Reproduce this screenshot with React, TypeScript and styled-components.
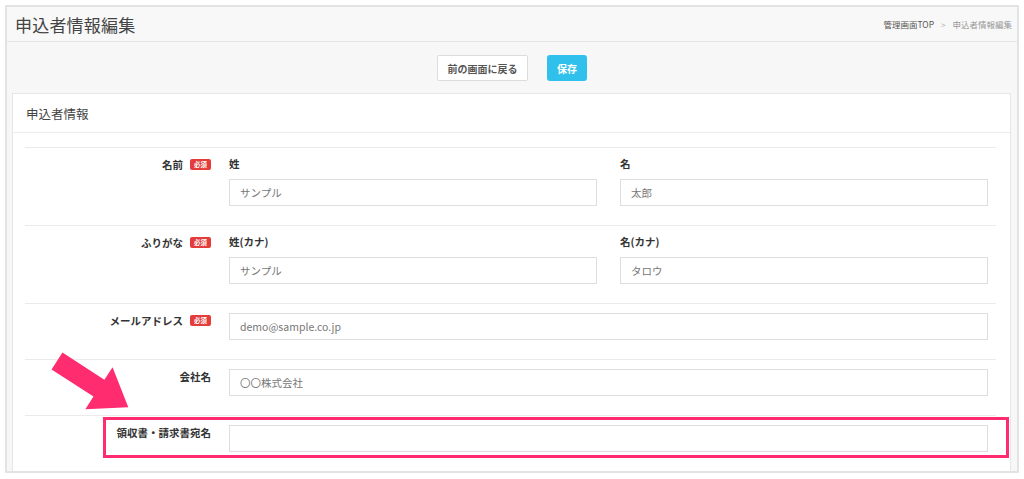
import React from 'react';
import { styled, createGlobalStyle } from 'styled-components';

const GlobalStyle = createGlobalStyle`
  html, body {
    margin: 0;
    padding: 0;
    background: #ffffff;
  }
  body {
    font-family: "Noto Sans CJK JP", "Noto Sans", sans-serif;
    color: #333;
  }
  * {
    box-sizing: border-box;
  }
`;

type Field = {
  label: string;
  required?: boolean;
  inputs: { sub?: string; value: string }[];
  highlight?: boolean;
};

const fields: Field[] = [
  {
    label: '名前',
    required: true,
    inputs: [
      { sub: '姓', value: 'サンプル' },
      { sub: '名', value: '太郎' },
    ],
  },
  {
    label: 'ふりがな',
    required: true,
    inputs: [
      { sub: '姓(カナ)', value: 'サンプル' },
      { sub: '名(カナ)', value: 'タロウ' },
    ],
  },
  {
    label: 'メールアドレス',
    required: true,
    inputs: [{ value: 'demo@sample.co.jp' }],
  },
  {
    label: '会社名',
    inputs: [{ value: '〇〇株式会社' }],
  },
  {
    label: '領収書・請求書宛名',
    inputs: [{ value: '' }],
    highlight: true,
  },
];

const Arrow = () => (
  <ArrowSvg width="100" height="80" viewBox="0 0 100 80">
    <g transform="translate(17,21) rotate(33)">
      <polygon
        points="0,-10 50,-10 50,-25 85,0 50,25 50,10 0,10"
        fill="#ff2d6f"
      />
    </g>
  </ArrowSvg>
);

const App = () => {
  return (
    <>
      <GlobalStyle />
      <Frame>
        <Header>
          <Title>申込者情報編集</Title>
          <Breadcrumb>
            <Crumb>管理画面TOP</Crumb>
            <Sep>&gt;</Sep>
            <Crumb $current>申込者情報編集</Crumb>
          </Breadcrumb>
        </Header>
        <Toolbar>
          <BackButton>前の画面に戻る</BackButton>
          <SaveButton>保存</SaveButton>
        </Toolbar>
        <Panel>
          <PanelHeader>申込者情報</PanelHeader>
          <PanelBody>
            {fields.map((f) => (
              <Row key={f.label}>
                <Label>
                  {f.label}
                  {f.required && <Badge>必須</Badge>}
                </Label>
                <Inputs $cols={f.inputs.length}>
                  {f.inputs.map((inp, i) => (
                    <InputCell key={i}>
                      {inp.sub && <SubLabel>{inp.sub}</SubLabel>}
                      <TextBox $single={!inp.sub}>{inp.value}</TextBox>
                    </InputCell>
                  ))}
                </Inputs>
                {f.highlight && <Highlight />}
              </Row>
            ))}
          </PanelBody>
        </Panel>
        <Arrow />
      </Frame>
    </>
  );
};

const Frame = styled.div`
  position: relative;
  margin: 5px 5px 0 5px;
  width: 1014px;
  height: 468px;
  border: 2px solid #e3e3e3;
  background: #f7f7f7;
  display: flex;
  flex-direction: column;
  overflow: hidden;
`;

const Header = styled.div`
  flex-shrink: 0;
  height: 35px;
  display: flex;
  align-items: center;
  justify-content: space-between;
  padding: 0 5px 0 8px;
  background: #f8f8f8;
  border-bottom: 1px solid #e6e6e6;
`;

const Title = styled.h1`
  margin: 0;
  font-size: 17px;
  font-weight: 400;
  color: #444;
  letter-spacing: 0.2px;
`;

const Breadcrumb = styled.div`
  display: flex;
  align-items: center;
  gap: 7px;
  font-size: 8.5px;
`;

const Crumb = styled.span<{ $current?: boolean }>`
  color: ${(p) => (p.$current ? '#999' : '#555')};
`;

const Sep = styled.span`
  color: #aaa;
  font-size: 8px;
`;

const Toolbar = styled.div`
  flex-shrink: 0;
  display: flex;
  justify-content: center;
  gap: 19px;
  padding: 13px 0 12px;
`;

const BackButton = styled.button`
  height: 26px;
  width: 91px;
  background: #fff;
  border: 1px solid #dcdcdc;
  border-radius: 2px;
  font-family: inherit;
  font-size: 10px;
  font-weight: 700;
  color: #555;
  padding: 0;
`;

const SaveButton = styled.button`
  height: 26px;
  width: 40px;
  background: #2fc1ec;
  border: none;
  border-radius: 3px;
  font-family: inherit;
  font-size: 10px;
  font-weight: 700;
  color: #fff;
  padding: 0;
`;

const Panel = styled.div`
  margin: 0 6px 0 5px;
  flex: 1;
  min-height: 0;
  background: #fff;
  border: 1px solid #e6e6e6;
  border-bottom: none;
  overflow: hidden;
`;

const PanelHeader = styled.div`
  height: 39px;
  display: flex;
  align-items: center;
  padding-left: 13px;
  font-size: 12.5px;
  color: #444;
  border-bottom: 1px solid #ececec;
`;

const PanelBody = styled.div`
  padding: 14px 14px 0 12px;
`;

const Row = styled.div`
  position: relative;
  display: grid;
  grid-template-columns: 186px 1fr;
  column-gap: 18px;
  padding: 6px 8px 19px 0;
  border-top: 1px solid #ebebeb;
`;

const Label = styled.div`
  display: flex;
  justify-content: flex-end;
  align-items: center;
  height: 18px;
  margin-top: 1px;
  font-size: 10.5px;
  font-weight: 700;
  color: #333;
`;

const Badge = styled.span`
  display: inline-flex;
  align-items: center;
  justify-content: center;
  width: 21px;
  height: 11px;
  margin-left: 7px;
  background: #e43b3b;
  border-radius: 2px;
  color: #fff;
  font-size: 6.5px;
  font-weight: 700;
`;

const Inputs = styled.div<{ $cols: number }>`
  display: grid;
  grid-template-columns: repeat(${(p) => p.$cols}, 1fr);
  column-gap: 23px;
`;

const InputCell = styled.div`
  display: flex;
  flex-direction: column;
`;

const SubLabel = styled.div`
  height: 18px;
  margin-bottom: 7px;
  display: flex;
  align-items: center;
  font-size: 10.5px;
  font-weight: 700;
  color: #333;
`;

const TextBox = styled.div<{ $single?: boolean }>`
  height: 27px;
  margin-top: ${(p) => (p.$single ? '3px' : '0')};
  border: 1px solid #dedede;
  display: flex;
  align-items: center;
  padding-left: 10px;
  font-size: 10.5px;
  color: #777;
`;

const Highlight = styled.div`
  position: absolute;
  left: 78px;
  top: 1px;
  width: 906px;
  height: 41px;
  border: 3px solid #ff2d6f;
  pointer-events: none;
`;

const ArrowSvg = styled.svg`
  position: absolute;
  left: 33px;
  top: 333px;
`;

export default App;
